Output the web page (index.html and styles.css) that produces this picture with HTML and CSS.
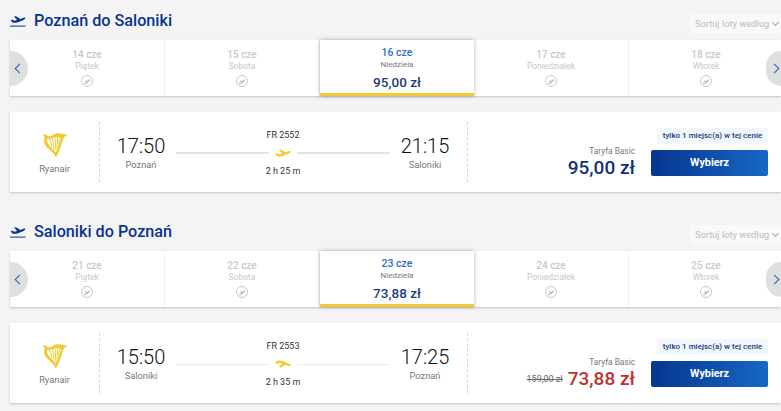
FILE: index.html
```html
<!DOCTYPE html>
<html lang="pl">

<head>
  <meta charset="UTF-8" />
  <meta name="viewport" content="width=device-width, initial-scale=1.0" />
  <title>Wybierz loty</title>
  <link rel="stylesheet" href="styles.css">
</head>

<body>
  <svg class="sprites" aria-hidden="true">
    <symbol id="plane" viewBox="0 0 24 12">
      <path d="M0 6.6 L3 6.4 L6 8 L10.6 6.6 L5.6 1 L8.8 0.8 L15.8 5 L20 3.4 C22.6 2.4 24.2 2.8 23.8 4 C23.2 5.6 20 7.2 17 8.4 L12 10.4 C8 11.8 4 11.6 2.6 10.4 Z" />
    </symbol>
    <symbol id="harp" viewBox="0 0 26 26">
      <path class="harp-body" d="M0.5 2.5 C3 1.4 5.5 4.6 8 4.2 C11 3.8 11 1.8 14 1.4 C18 1 22 3 25.8 2.6 C24 4 22.4 4.6 21.6 6.2 C20 10 18 18 14.6 24.6 C14 25.4 13.2 24.8 13 24 C11.6 20 5 17 2.4 11.6 C1.4 9 3 6.4 2.4 4.8 C2 3.8 1.2 3.2 0.5 2.5 Z M5.4 6.8 C4.6 9 5.6 11.4 7.4 13.6 C9.6 16 12.2 18 13.8 20.4 C16 15.4 17.4 10.6 19 6.4 C17 5.4 15 5 13 5.4 C11 5.8 8 7.4 5.4 6.8 Z" />
      <path class="harp-strings" d="M7.6 7 L10 14.6 M10.4 6.6 L12.2 17 M13 6 L14 18.6 M15.4 6 L15.2 16 M17.6 6.6 L16.6 12" />
    </symbol>
  </svg>

  <!-- Outbound -->
  <section class="leg">
    <header class="leg-head">
      <div class="leg-title">
        <svg class="leg-icon" viewBox="0 0 16 14"><use href="#plane" width="15" height="8" x="0.5" y="1.5" /><rect x="0" y="11.6" width="15.5" height="1" /></svg>
        <h2>Poznań do Saloniki</h2>
      </div>
      <div class="sort">Sortuj loty według <span class="sort-arrow"></span></div>
    </header>

    <div class="dates">
      <button class="nav nav-prev"><span class="chevron"></span></button>
      <div class="date"><b>14 cze</b><span>Piątek</span><i class="no-flight"><svg><use href="#plane" /></svg></i></div>
      <div class="date"><b>15 cze</b><span>Sobota</span><i class="no-flight"><svg><use href="#plane" /></svg></i></div>
      <div class="date active"><b>16 cze</b><span>Niedziela</span><strong>95,00 zł</strong></div>
      <div class="date"><b>17 cze</b><span>Poniedziałek</span><i class="no-flight"><svg><use href="#plane" /></svg></i></div>
      <div class="date"><b>18 cze</b><span>Wtorek</span><i class="no-flight"><svg><use href="#plane" /></svg></i></div>
      <button class="nav nav-next"><span class="chevron"></span></button>
    </div>

    <div class="flight">
      <div class="airline">
        <svg class="harp"><use href="#harp" /></svg>
        <span>Ryanair</span>
      </div>
      <div class="route">
        <div class="stop"><div class="time">17:50</div><div class="city">Poznań</div></div>
        <div class="path">
          <div class="flight-no">FR 2552</div>
          <div class="line"><svg class="line-plane"><use href="#plane" /></svg></div>
          <div class="duration">2 h 25 m</div>
        </div>
        <div class="stop"><div class="time">21:15</div><div class="city">Saloniki</div></div>
      </div>
      <div class="offer">
        <div class="fare">
          <div class="fare-name">Taryfa Basic</div>
          <div class="price">95,00 zł</div>
        </div>
        <div class="action">
          <div class="seats">tylko 1 miejsc(a) w tej cenie</div>
          <button class="btn">Wybierz</button>
        </div>
      </div>
    </div>
  </section>

  <!-- Return -->
  <section class="leg">
    <header class="leg-head">
      <div class="leg-title">
        <svg class="leg-icon" viewBox="0 0 16 14"><use href="#plane" width="15" height="8" x="0.5" y="1.5" /><rect x="0" y="11.6" width="15.5" height="1" /></svg>
        <h2>Saloniki do Poznań</h2>
      </div>
      <div class="sort">Sortuj loty według <span class="sort-arrow"></span></div>
    </header>

    <div class="dates">
      <button class="nav nav-prev"><span class="chevron"></span></button>
      <div class="date"><b>21 cze</b><span>Piątek</span><i class="no-flight"><svg><use href="#plane" /></svg></i></div>
      <div class="date"><b>22 cze</b><span>Sobota</span><i class="no-flight"><svg><use href="#plane" /></svg></i></div>
      <div class="date active"><b>23 cze</b><span>Niedziela</span><strong>73,88 zł</strong></div>
      <div class="date"><b>24 cze</b><span>Poniedziałek</span><i class="no-flight"><svg><use href="#plane" /></svg></i></div>
      <div class="date"><b>25 cze</b><span>Wtorek</span><i class="no-flight"><svg><use href="#plane" /></svg></i></div>
      <button class="nav nav-next"><span class="chevron"></span></button>
    </div>

    <div class="flight">
      <div class="airline">
        <svg class="harp"><use href="#harp" /></svg>
        <span>Ryanair</span>
      </div>
      <div class="route">
        <div class="stop"><div class="time">15:50</div><div class="city">Saloniki</div></div>
        <div class="path">
          <div class="flight-no">FR 2553</div>
          <div class="line line-thin"><svg class="line-plane landing"><use href="#plane" /></svg></div>
          <div class="duration">2 h 35 m</div>
        </div>
        <div class="stop"><div class="time">17:25</div><div class="city">Poznań</div></div>
      </div>
      <div class="offer">
        <div class="fare">
          <div class="fare-name">Taryfa Basic</div>
          <div class="price-row">
            <s class="old-price">159,00 zł</s>
            <div class="price sale">73,88 zł</div>
          </div>
        </div>
        <div class="action">
          <div class="seats">tylko 1 miejsc(a) w tej cenie</div>
          <button class="btn">Wybierz</button>
        </div>
      </div>
    </div>
  </section>
</body>

</html>
```

FILE: styles.css
```css
* {
  margin: 0;
  padding: 0;
  box-sizing: border-box;
  font-family: Roboto, "Liberation Sans", sans-serif;
}

body {
  background-color: #f4f4f4;
  color: #222;
  overflow: hidden;
  height: 411px;
}

.sprites {
  display: none;
}

.leg {
  padding-left: 10px;
  margin-bottom: 19px;
}

/* Heading row */
.leg-head {
  height: 40px;
  display: flex;
  justify-content: space-between;
  align-items: flex-start;
}

.leg-title {
  display: flex;
  align-items: center;
  gap: 8px;
  padding-top: 11px;
}

.leg-icon {
  width: 16px;
  height: 14px;
  fill: #073590;
}

h2 {
  font-size: 16.2px;
  line-height: 19px;
  font-weight: 500;
  color: #073590;
}

.sort {
  width: 91px;
  height: 19px;
  margin-top: 14px;
  padding-left: 5px;
  background: #f9f9f9;
  border-radius: 2px;
  color: #bbb;
  font-size: 9.3px;
  line-height: 19px;
  white-space: nowrap;
}

.sort-arrow {
  display: inline-block;
  width: 5px;
  height: 5px;
  margin: 0 0 2px 1px;
  border-right: 1px solid #8fa9cf;
  border-bottom: 1px solid #8fa9cf;
  transform: rotate(45deg);
}

/* Date strip */
.dates {
  position: relative;
  display: flex;
  height: 56px;
  margin-bottom: 16px;
  background: #fff;
  box-shadow: 0 1px 2px rgba(0, 0, 0, 0.2);
}

.date {
  flex: 0 0 155px;
  display: flex;
  flex-direction: column;
  align-items: center;
  padding-top: 9px;
  border-right: 1px solid #f1f1f1;
  color: #c8c8c8;
}

.date b {
  font-size: 10px;
  line-height: 12px;
  font-weight: 500;
}

.date span {
  font-size: 8.5px;
  line-height: 11px;
}

.no-flight {
  width: 12px;
  height: 12px;
  margin-top: 3px;
  border: 1px solid #c9c9c9;
  border-radius: 50%;
  display: flex;
  align-items: center;
  justify-content: center;
}

.no-flight svg {
  width: 8px;
  height: 5px;
  fill: #b5b5b5;
  transform: rotate(-25deg);
}

.date.active {
  flex-basis: 154px;
  padding-top: 7px;
  border-right: none;
  border-bottom: 3px solid #f1c933;
  box-shadow: 0 0 4px rgba(0, 0, 0, 0.3);
  position: relative;
}

.date.active b {
  color: #2e6ebb;
  font-size: 10.5px;
}

.date.active span {
  color: #777;
  font-size: 8px;
}

.date.active strong {
  margin-top: 4px;
  color: #1d3a80;
  font-size: 13.5px;
  line-height: 16px;
  font-weight: 500;
}

.nav {
  position: absolute;
  top: 11px;
  width: 18px;
  height: 35px;
  border: none;
  background: #dfdfdf;
  display: flex;
  align-items: center;
}

.nav-prev {
  left: 0;
  border-radius: 0 18px 18px 0;
  justify-content: flex-start;
  padding-left: 4px;
}

.nav-next {
  right: 0;
  width: 15px;
  border-radius: 18px 0 0 18px;
  justify-content: flex-end;
  padding-right: 3px;
}

.chevron {
  width: 7px;
  height: 7px;
  border-left: 1px solid #2e5fa8;
  border-bottom: 1px solid #2e5fa8;
  transform: rotate(45deg);
  margin-left: 2px;
}

.nav-next .chevron {
  transform: rotate(225deg);
  margin-left: 0;
}

/* Flight card */
.flight {
  display: flex;
  height: 80px;
  background: #fff;
  box-shadow: 0 1px 2px rgba(0, 0, 0, 0.2);
}

.airline {
  flex: 0 0 90px;
  margin: 10px 0;
  border-right: 1px dashed #d6d6d6;
  display: flex;
  flex-direction: column;
  align-items: center;
  color: #777;
  font-size: 9.3px;
}

.harp {
  width: 26px;
  height: 26px;
  margin: 10px 0 5px;
}

.harp-body {
  fill: #f1cb35;
  fill-rule: evenodd;
}

.harp-strings {
  stroke: #f1cb35;
  stroke-width: 1;
  fill: none;
}

.route {
  flex: 0 0 368px;
  margin: 10px 0;
  padding: 0 16px 0 15px;
  border-right: 1px dashed #d6d6d6;
  display: flex;
  justify-content: space-between;
}

.stop {
  width: 52px;
  padding-top: 12px;
  text-align: center;
}

.time {
  font-size: 20px;
  font-weight: 300;
  line-height: 24px;
  color: #111;
  white-space: nowrap;
}

.city {
  font-size: 9.3px;
  line-height: 13px;
  color: #777;
  white-space: nowrap;
}

.path {
  flex: 0 0 214px;
  display: flex;
  flex-direction: column;
  align-items: center;
  padding-top: 8px;
  font-size: 9px;
  color: #333;
}

.flight-no {
  line-height: 11px;
}

.line {
  width: 100%;
  height: 2px;
  margin: 11px 0 12px;
  background: #e3e3e3;
  display: flex;
  justify-content: center;
  align-items: center;
}

.line-thin {
  background: linear-gradient(#ececec, #ececec) center / 100% 1px no-repeat;
}

.line-plane {
  width: 28px;
  height: 8px;
  padding: 0 6px;
  background: #fff;
  fill: #f1cb35;
  flex: none;
}

.landing {
  transform: scaleY(-1);
}

.duration {
  line-height: 11px;
}

.offer {
  flex: 1;
  display: flex;
  justify-content: flex-end;
  padding-right: 13px;
  gap: 16px;
}

.fare {
  display: flex;
  flex-direction: column;
  align-items: flex-end;
  padding-top: 34px;
}

.fare-name {
  font-size: 8.3px;
  line-height: 10px;
  color: #777;
}

.price {
  font-size: 19px;
  line-height: 24px;
  font-weight: 500;
  color: #13307f;
  white-space: nowrap;
}

.price-row {
  display: flex;
  align-items: center;
  gap: 5px;
}

.old-price {
  font-size: 9px;
  color: #666;
  white-space: nowrap;
}

.sale {
  color: #c0302b;
}

.action {
  width: 117px;
  display: flex;
  flex-direction: column;
  align-items: flex-end;
  padding-top: 16px;
}

.seats {
  width: 111px;
  height: 16px;
  background: #f2f7fc;
  border-radius: 2px;
  color: #1d3a80;
  font-size: 8px;
  font-weight: 500;
  line-height: 16px;
  text-align: center;
  white-space: nowrap;
}

.btn {
  width: 117px;
  height: 26px;
  margin-top: 6px;
  padding-bottom: 2px;
  background: linear-gradient(90deg, #073590, #1668c4);
  color: #fff;
  border: none;
  border-radius: 2px;
  font-size: 10.8px;
  font-weight: 700;
}
```
